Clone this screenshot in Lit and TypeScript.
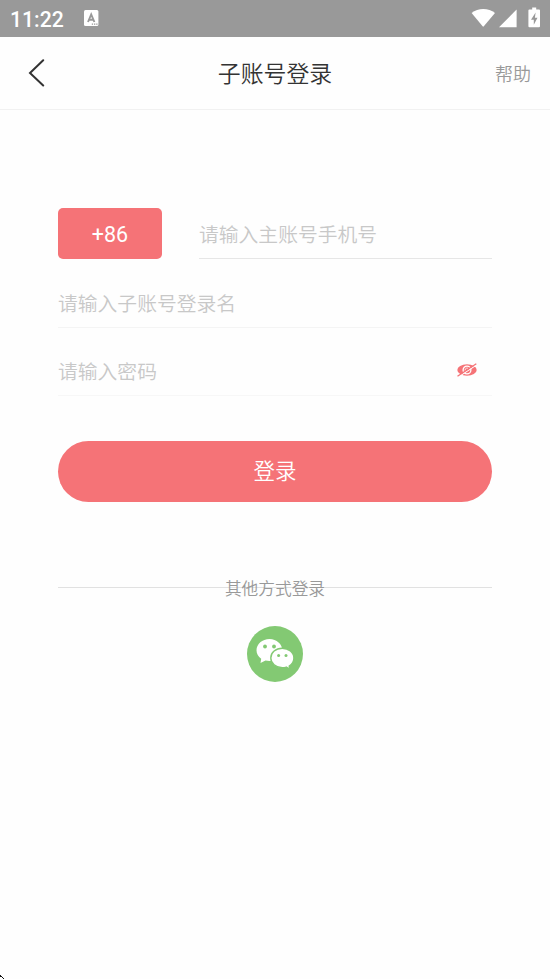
import { LitElement, html, css } from "lit";
import { customElement } from "lit/decorators.js";

@customElement("app-root")
export class AppRoot extends LitElement {
  static styles = css`
    :host {
      display: block;
      position: relative;
      height: 979px;
      overflow: hidden;
      background: #fefefe;
      font-family: Roboto, "Noto Sans CJK SC DemiLight", "Noto Sans CJK SC", sans-serif;
      font-weight: 350;
    }
    * { box-sizing: border-box; }
    svg { display: block; }
    .status {
      display: flex;
      align-items: center;
      height: 37px;
      padding: 0 9px 1px 10px;
      background: #999;
      color: #fff;
    }
    .time { font-size: 21.2px; line-height: 36px; padding-top: 3px; width: 74px; font-weight: 500; }
    .signals { margin-left: auto; }
    .nav {
      display: grid;
      grid-template-columns: 1fr auto 1fr;
      align-items: center;
      height: 73px;
      padding: 0 19px 0 28px;
      border-bottom: 1px solid #f1f1f1;
    }
    .title { margin: 0 0 0 -9px; padding-top: 3px; font-size: 22.9px; line-height: 34px; font-weight: inherit; color: #333; }
    .help { justify-self: end; font-size: 18px; line-height: 26px; color: #999; padding-top: 3px; }
    .form { padding: 98px 58px 0; }
    .field {
      display: flex;
      align-items: center;
      color: #c8c8c8;
      font-size: 19.8px;
      line-height: 30px;
      border-bottom: 1px solid #f4f4f4;
    }
    .phone { display: flex; height: 51px; gap: 37px; }
    .code {
      width: 104px;
      height: 50.5px;
      border-radius: 5px;
      background: #f57377;
      color: #fff;
      font-size: 21.5px;
      font-weight: 400;
      line-height: 53px;
      text-align: center;
    }
    .phone .field { flex: 1; border-color: #e6e6e6; padding-top: 5px; }
    .name { height: 69px; padding-top: 23px; }
    .pass { height: 68px; padding: 23px 15.5px 0 0; justify-content: space-between; border-color: #f7f7f7; }
    .pass svg { margin-top: -6px; }
    .submit {
      height: 61px;
      margin-top: 45px;
      border-radius: 31px;
      background: #f57377;
      color: #fff;
      font-size: 21.5px;
      line-height: 61px;
      text-align: center;
    }
    .other {
      display: grid;
      align-items: center;
      justify-items: center;
      height: 31px;
      margin-top: 70px;
      color: #999;
      font-size: 16.7px;
      line-height: 26px;
    }
    .other > * { grid-area: 1 / 1; }
    .other span { padding-top: 5px; }
    .rule { width: 100%; height: 1px; background: #e1e1e1; }
    .wechat { margin: 22.5px auto 0; }
    .corner { position: absolute; left: 0; bottom: 0; }
  `;

  render() {
    return html`
      <header class="status">
        <span class="time">11:22</span>
        <svg width="15" height="16" viewBox="0 0 15 16">
          <rect width="14.4" height="16" rx="1.5" fill="#fff" />
          <path d="M4 12 7.200 4.500 10.400 12M5.200 9.700h4" fill="none" stroke="#999" stroke-width="1.900" />
          <path d="M7.800 14.200h1.300M10 14.200h1.300M12.200 14.200h1.300" stroke="#999" stroke-width="1.200" />
        </svg>
        <svg class="signals" width="70" height="22" viewBox="0 0 70 22">
          <path d="M0.600 6C7 .6 17.600 .6 24 6L12.800 19.300Q12.200 20 11.600 19.300Z" fill="#fff" />
          <path d="M28 20.200 45.600 2.500V20.200Z" fill="#fff" />
          <path d="M61.200 .6h4v2h2.800q1 0 1 1v15.600q0 1-1 1H58.400q-1 0-1-1V3.600q0-1 1-1h2.800z" fill="#fff" />
          <path d="M64.600 5.500 60 12.700h2.800v5.100L66.500 10.700h-2.600z" fill="#999" />
        </svg>
      </header>
      <nav class="nav">
        <svg width="18" height="28" viewBox="0 0 18 28">
          <path d="M15.200 1.200 2 14 15.200 26.500" fill="none" stroke="#333" stroke-width="2" stroke-linecap="round" />
        </svg>
        <h1 class="title">子账号登录</h1>
        <span class="help">帮助</span>
      </nav>
      <main class="form">
        <div class="phone">
          <div class="code">+86</div>
          <div class="field">请输入主账号手机号</div>
        </div>
        <div class="field name">请输入子账号登录名</div>
        <div class="field pass">
          <span>请输入密码</span>
          <svg width="20" height="14" viewBox="0 0 20 14">
            <ellipse cx="10" cy="7" rx="9.700" ry="5.700" fill="#f57377" />
            <circle cx="10" cy="7" r="3.900" fill="none" stroke="#fff" stroke-width="1.300" />
            <path d="M8.500 8.300a2 2 0 0 1 2.500-3" stroke="#fff" stroke-width=".8" fill="none" />
            <path d="M1 14.200 20 1.700" stroke="#fff" stroke-width="1.100" />
            <path d="M.5 13.300 19.300 .7" stroke="#f57377" stroke-width="1.300" />
          </svg>
        </div>
        <div class="submit">登录</div>
        <div class="other">
          <div class="rule"></div>
          <span>其他方式登录</span>
        </div>
        <svg class="wechat" width="56" height="56" viewBox="0 0 56 56">
          <circle cx="28" cy="28" r="28" fill="#83c973" />
          <path d="M22.500 13C15.200 13 9.500 18 9.500 24.300c0 3.600 1.800 6.500 4.700 8.500l-.7 4.200 5-2.400c1.300.3 2.600.5 4 .5 7.200 0 12.800-4.800 12.800-10.800S29.700 13 22.500 13z" fill="#fff" />
          <path d="M35.200 22.200c-6.400 0-11.400 4.300-11.400 9.700s5 9.800 11.400 9.800c1.500 0 2.900-.2 4.100-.6l3.500 2.200-.6-3.300c2.900-1.800 4.700-4.700 4.700-8 0-5.500-5.300-9.800-11.700-9.800z" fill="#fff" stroke="#83c973" stroke-width="1.400" />
          <g fill="#83c973">
            <circle cx="18" cy="20.500" r="1.900" /><circle cx="27" cy="20.500" r="1.900" />
            <circle cx="31.600" cy="29.500" r="1.500" /><circle cx="39" cy="29.500" r="1.500" />
          </g>
        </svg>
      </main>
      <svg class="corner" width="5" height="4" viewBox="0 0 5 4">
        <path d="M0 0h1v1h1v1H0zM2 2h1v1H2zM3 3h1v1H3z" fill="#111" />
      </svg>
    `;
  }
}
